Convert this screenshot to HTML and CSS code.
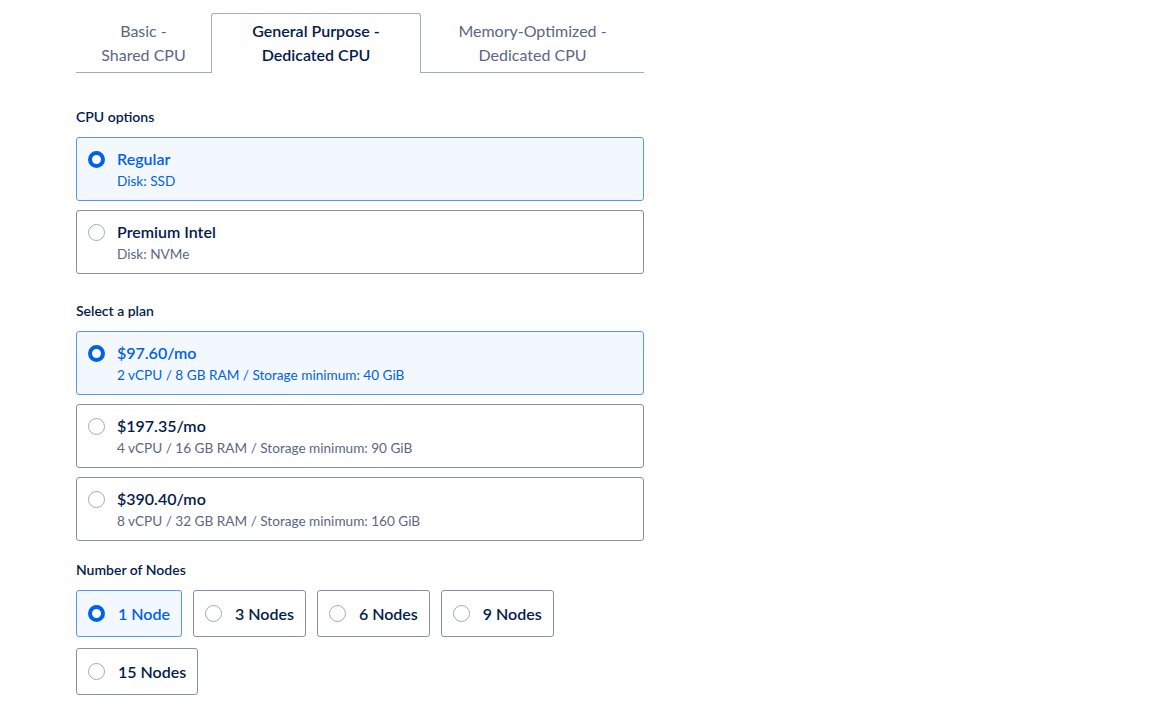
FILE: index.html
```html
<!DOCTYPE html>
<html lang="en">
<head>
  <meta charset="UTF-8" />
  <title>Create Cluster</title>
  <link rel="stylesheet" href="styles.css">
</head>
<body>
  <div class="page">
    <div class="tabs">
      <div class="tab tab-basic">Basic -<br>Shared CPU</div>
      <div class="tab tab-general active">General Purpose -<br>Dedicated CPU</div>
      <div class="tab tab-memory">Memory-Optimized -<br>Dedicated CPU</div>
    </div>

    <h4 class="section-label cpu-label">CPU options</h4>
    <div class="option-list">
      <label class="option selected">
        <span class="radio"></span>
        <span class="option-text">
          <span class="option-title">Regular</span>
          <span class="option-sub">Disk: SSD</span>
        </span>
      </label>
      <label class="option">
        <span class="radio"></span>
        <span class="option-text">
          <span class="option-title">Premium Intel</span>
          <span class="option-sub">Disk: NVMe</span>
        </span>
      </label>
    </div>

    <h4 class="section-label plan-label">Select a plan</h4>
    <div class="option-list">
      <label class="option selected">
        <span class="radio"></span>
        <span class="option-text">
          <span class="option-title">$97.60/mo</span>
          <span class="option-sub">2 vCPU / 8 GB RAM / Storage minimum: 40 GiB</span>
        </span>
      </label>
      <label class="option">
        <span class="radio"></span>
        <span class="option-text">
          <span class="option-title">$197.35/mo</span>
          <span class="option-sub">4 vCPU / 16 GB RAM / Storage minimum: 90 GiB</span>
        </span>
      </label>
      <label class="option">
        <span class="radio"></span>
        <span class="option-text">
          <span class="option-title">$390.40/mo</span>
          <span class="option-sub">8 vCPU / 32 GB RAM / Storage minimum: 160 GiB</span>
        </span>
      </label>
    </div>

    <h4 class="section-label nodes-label">Number of Nodes</h4>
    <div class="nodes">
      <label class="node selected"><span class="radio"></span>1 Node</label>
      <label class="node"><span class="radio"></span>3 Nodes</label>
      <label class="node"><span class="radio"></span>6 Nodes</label>
      <label class="node"><span class="radio"></span>9 Nodes</label>
      <label class="node"><span class="radio"></span>15 Nodes</label>
    </div>
  </div>
</body>
</html>
```

FILE: styles.css
```css
* {
  box-sizing: border-box;
}
body {
  margin: 0;
  background: #fff;
  font-family: 'Lato', 'Open Sans', sans-serif;
  color: #031b4e;
}
.page {
  width: 568px;
  margin-left: 76px;
  padding-top: 13px;
}
.tabs {
  display: flex;
  border-bottom: 1px solid #a3abbf;
}
.tab {
  text-align: center;
  font-size: 16px;
  line-height: 24px;
  color: #5b6784;
  padding: 5px 0 5px;
  margin-bottom: -1px;
  border: 1px solid transparent;
  border-bottom: none;
}
.tab-basic {
  width: 135px;
}
.tab-general {
  width: 210px;
}
.tab-memory {
  flex: 1;
}
.tab.active {
  color: #031b4e;
  font-weight: 600;
  border-color: #a3abbf;
  border-radius: 3px 3px 0 0;
  background: #fff;
  padding-bottom: 6px;
}
.section-label {
  font-size: 14px;
  font-weight: 600;
  margin: 0 0 10px;
  line-height: 20px;
}
.cpu-label {
  margin-top: 34px;
}
.plan-label {
  margin-top: 27px;
}
.nodes-label {
  margin-top: 19px;
}
.option-list {
  display: flex;
  flex-direction: column;
  gap: 9px;
}
.option {
  display: flex;
  align-items: flex-start;
  height: 64px;
  padding: 11px 14px 0 11px;
  border: 1px solid #8790a6;
  border-radius: 3px;
  background: #fff;
}
.option.selected {
  border-color: #5a95f5;
  background: #f3f8ff;
}
.radio {
  width: 17px;
  height: 17px;
  flex: none;
  border-radius: 50%;
  border: 1px solid #a2a9ba;
  background: #fff;
}
.option .radio {
  margin: 2px 12px 0 0;
}
.selected .radio {
  border: 4px solid #0061eb;
}
.option-text {
  display: flex;
  flex-direction: column;
}
.option-title {
  font-size: 16px;
  font-weight: 600;
  line-height: 20px;
}
.option-sub {
  font-size: 13.6px;
  line-height: 18px;
  margin-top: 3px;
  color: #5b6784;
}
.selected .option-title,
.selected .option-sub {
  color: #0061eb;
}
.nodes {
  display: flex;
  flex-wrap: wrap;
  gap: 11px;
  width: 500px;
}
.node {
  display: flex;
  align-items: center;
  height: 47px;
  padding: 0 11px 1px 11px;
  border: 1px solid #8790a6;
  border-radius: 3px;
  font-size: 16px;
  font-weight: 600;
  color: #031b4e;
}
.node .radio {
  margin-right: 13px;
}
.node.selected {
  border-color: #5a95f5;
  background: #f3f8ff;
  color: #0061eb;
}
```
